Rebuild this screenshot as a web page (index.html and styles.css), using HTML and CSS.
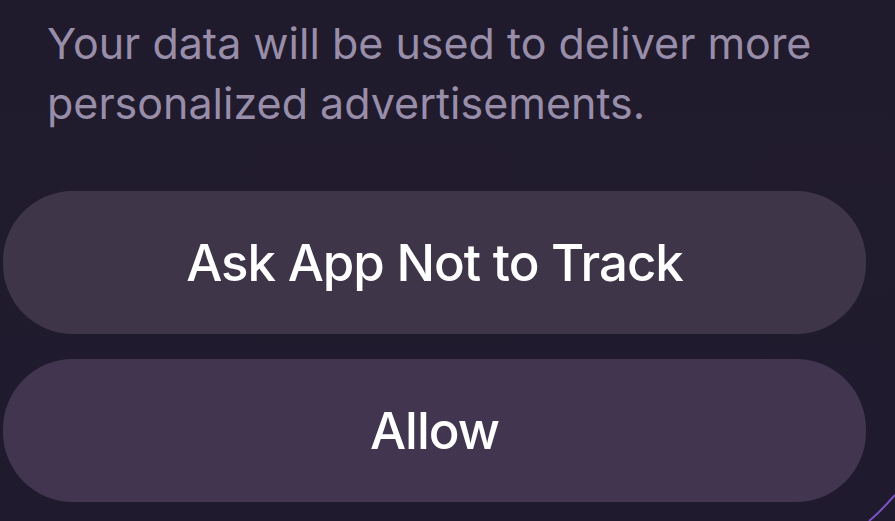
FILE: index.html
```html
<!DOCTYPE html>
<html>
  <head>
    <meta name="viewport" content="width=device-width, initial-scale=1.0" />
    <link rel="stylesheet" href="styles.css">
  </head>

  <body>
    <div class="sheet">
      <p class="message">
        Your data will be used to deliver more personalized advertisements.
      </p>

      <div class="actions">
        <button type="button" class="choice">Ask App Not to Track</button>
        <button type="button" class="choice allow">Allow</button>
      </div>
    </div>

    <svg class="glow" width="30" height="30" viewBox="0 0 30 30">
      <path d="M4 30 Q14 22 30 4" fill="none" stroke="#7b52c4" stroke-width="2" />
    </svg>
  </body>
</html>
```

FILE: styles.css
```css
body {
  margin: 0;
  height: 521px;
  overflow: hidden;
  background: linear-gradient(to bottom, #201b2c, #201a2e);
  font-family: 'Inter', 'Roboto', sans-serif;
  position: relative;
}

.sheet {
  width: 863px;
  padding: 13px 0 0 3px;
}

.message {
  margin: 0 0 0 44px;
  font-size: 43px;
  line-height: 60px;
  color: #998eaa;
  letter-spacing: 0;
}

.actions {
  display: flex;
  flex-direction: column;
  gap: 25px;
  margin-top: 58px;
}

.choice {
  height: 143px;
  width: 100%;
  border: none;
  border-radius: 70px;
  background: #3e3549;
  color: #ffffff;
  font-family: 'Inter', 'Roboto', sans-serif;
  font-size: 51px;
  font-weight: 500;
  letter-spacing: -1px;
  cursor: pointer;
}

.choice.allow {
  background: #42354f;
}

.glow {
  position: absolute;
  right: 0;
  bottom: 0;
}
```
